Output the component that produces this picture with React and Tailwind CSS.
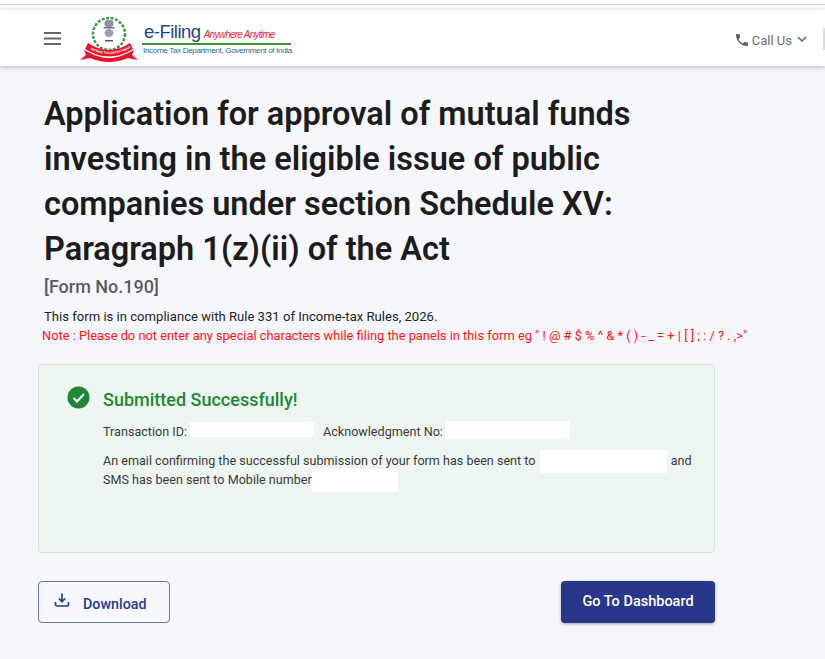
import React from "react";

function Emblem() {
  return (
    <svg width="60" height="46" viewBox="0 0 60 46" className="shrink-0">
      <circle cx="30" cy="18" r="16" fill="none" stroke="#3d9a4a" strokeWidth="2.500" strokeDasharray="3 1.500" />
      <circle cx="30" cy="18" r="13.500" fill="#fff" />
      <rect x="25.500" y="4" width="9" height="7" rx="3" fill="#8d93a3" />
      <rect x="24.500" y="11" width="11" height="1.500" fill="#6d7280" />
      <ellipse cx="30" cy="17" rx="4.500" ry="4" fill="#9aa0ae" />
      <rect x="26" y="24" width="8" height="1.500" fill="#555" />
      <path d="M1 44 L7 39 L5 34 L11 37 Q30 47 49 37 L55 34 L53 39 L59 44 L49 42 Q30 50 11 42 Z" fill="#e8112d" />
      <path d="M6 33 Q30 48 54 33 L51 27 Q30 41 9 27 Z" fill="#e8112d" />
      <path id="rb" d="M7 31 Q30 45 53 31" fill="none" />
      <text fontSize="3.200" fontWeight="700" fill="#fff" fontFamily="Liberation Sans, sans-serif">
        <textPath href="#rb" startOffset="5">INCOME TAX DEPARTMENT</textPath>
      </text>
    </svg>
  );
}

function Logo() {
  return (
    <div className="flex items-center gap-[3px] ml-[18px] mt-[1px]">
      <Emblem />
      <div className="flex flex-col w-[150px] -mt-[1px]">
        <div className="flex items-baseline pl-[2px] h-[23px] leading-[23px]">
          <span className="text-[18.500px] text-[#1d4587] font-['Liberation_Sans',sans-serif] tracking-[-0.500px]">e-Filing</span>
          <span className="text-[10px] italic text-[#e8293f] ml-[3px] font-['Liberation_Sans',sans-serif] tracking-[-0.750px] whitespace-nowrap">Anywhere Anytime</span>
        </div>
        <div className="h-[2px] bg-[#3f8f3a] w-[149px]" />
        <div className="pl-[1px] text-[8.100px] leading-[12px] text-[#2f6a96] whitespace-nowrap font-['Liberation_Sans',sans-serif] tracking-[-0.350px]">
          Income Tax Department, Government of India
        </div>
      </div>
    </div>
  );
}

function Header() {
  return (
    <header className="h-[56px] bg-white shadow-[0_2px_5px_rgba(0,0,0,0.2)] flex items-center pl-[44px] relative">
      <svg width="17" height="13" viewBox="0 0 17 13" className="shrink-0">
        <rect y="0" width="17" height="2" fill="#666" />
        <rect y="5.500" width="17" height="2" fill="#666" />
        <rect y="11" width="17" height="2" fill="#666" />
      </svg>
      <Logo />
      <div className="ml-auto mr-[17px] mt-[5px] flex items-center text-[#6b6b6b] text-[13px]">
        <svg width="16" height="16" viewBox="0 0 24 24" fill="#5f5f5f" className="mr-[2px] -mt-[1px]">
          <path d="M6.600 10.800c1.400 2.800 3.800 5.100 6.600 6.600l2.200-2.200c.3-.3.700-.4 1-.2 1.100.4 2.300.6 3.600.6.600 0 1 .4 1 1V20c0 .6-.4 1-1 1C10.600 21 3 13.400 3 4c0-.6.400-1 1-1h3.500c.6 0 1 .4 1 1 0 1.300.2 2.500.6 3.600.1.300 0 .7-.2 1z" />
        </svg>
        <span>Call Us</span>
        <svg width="12" height="12" viewBox="0 0 12 12" fill="none" stroke="#5f5f5f" strokeWidth="1.500" className="ml-[4px] -mt-[4px]">
          <path d="M2 4l4 4 4-4" />
        </svg>
      </div>
      <div className="absolute right-0 top-[18px] w-[2px] h-[22px] bg-[#dcdcdc]" />
    </header>
  );
}

function Blank({ w, className = "" }) {
  return <span className={`inline-block bg-white align-middle ${w} ${className}`} />;
}

export default function App() {
  return (
    <div className="w-[825px] h-[659px] overflow-hidden bg-[#f6f7fc] font-['Roboto',sans-serif] text-[#212121]">
      <div className="h-[5px] bg-white border-b border-[#d4d4d4]" />
      <div className="h-[5px]" />
      <Header />
      <main className="pl-[38px] pr-[110px]">
        <div className="pl-[6px] pt-[26px]">
          <h1 className="text-[32.500px] leading-[45px] font-semibold text-[#1c1c1c] w-[620px]">
            Application for approval of mutual funds investing in the eligible issue of public companies under section Schedule XV: Paragraph 1(z)(ii) of the Act
          </h1>
          <div className="text-[18px] leading-[24px] font-medium text-[#5c5c5c] mt-[3px]">[Form No.190]</div>
          <p className="text-[13.100px] leading-[18px] text-[#222] mt-[9px]">This form is in compliance with Rule 331 of Income-tax Rules, 2026.</p>
        </div>
        <p className="text-[12.850px] leading-[18px] text-[#ff1111] ml-[4px] mt-[1px] whitespace-nowrap">
          Note : Please do not enter any special characters while filing the panels in this form eg " ! @ # $ % ^ &amp; * ( ) - _ = + | [ ] { } ; : / ? . ,&gt;"
        </p>
        <section className="mt-[19px] h-[189px] bg-[#edf6f0] border border-[#d5e6d9] rounded-[4px] pl-[28px] pt-[21px] flex items-start gap-[13px]">
          <svg width="23" height="23" viewBox="0 0 23 23" className="shrink-0">
            <circle cx="11.500" cy="11.500" r="11" fill="#1e8636" />
            <path d="M6.500 12l3.500 3.500 7-7.500" fill="none" stroke="#fff" strokeWidth="2" />
          </svg>
          <div className="flex-1 pr-[20px]">
            <h2 className="text-[18px] leading-[28px] font-medium text-[#1e8636]">Submitted Successfully!</h2>
            <div className="text-[12.600px] leading-[19px] text-[#3a3a3a] mt-[8px] flex items-center">
              <span>Transaction ID:</span>
              <Blank w="w-[124px]" className="ml-[3px] h-[15px] -mt-[5px]" />
              <span className="ml-[9px]">Acknowledgment No:</span>
              <Blank w="w-[125px]" className="ml-[2px] h-[18px] -mt-[4px]" />
            </div>
            <p className="text-[12.600px] leading-[19px] text-[#3a3a3a] mt-[10px]">
              An email confirming the successful submission of your form has been sent to <Blank w="w-[127px]" className="h-[23px] -my-[4px] ml-[1px] mr-[1px]" /> and SMS has been sent to Mobile number<Blank w="w-[86px]" className="h-[23px] -my-[4px]" />
            </p>
          </div>
        </section>
        <div className="mt-[28px] flex items-start justify-between">
          <button className="w-[132px] h-[42px] rounded-[4px] border border-[#6a74b8] flex items-center pl-[15px] text-[#2a3a8c] text-[14.300px] font-medium">
            <svg width="18" height="18" viewBox="0 0 18 18" fill="none" stroke="#2a3a8c" strokeWidth="1.700" className="-mt-[5px] -ml-[1px]">
              <path d="M9 2.500v8M5.800 7.500L9 10.700l3.200-3.200" />
              <path d="M2.500 11v2.500a1.500 1.500 0 0 0 1.500 1.500h10a1.500 1.500 0 0 0 1.500-1.500V11" />
            </svg>
            <span className="ml-[12px] mt-[6px]">Download</span>
          </button>
          <button className="w-[154px] h-[42px] rounded-[4px] bg-[#29378a] text-white text-[14.500px] font-medium shadow-[0_1px_3px_rgba(0,0,0,0.35)]">
            Go To Dashboard
          </button>
        </div>
      </main>
    </div>
  );
}
